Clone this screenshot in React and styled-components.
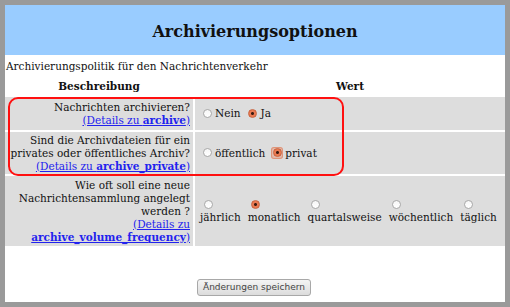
import React from "react";
import styled, { createGlobalStyle } from "styled-components";

const Global = createGlobalStyle`
  html, body { margin: 0; padding: 0; background: #9a9a9a; }
  body { font-family: "DejaVu Serif", serif; font-size: 10.5px; color: #111; }
`;

const Page = styled.div`
  position: relative;
  margin: 5px;
  height: 297px;
  background: #fff;
  overflow: hidden;
`;

const Header = styled.div`
  height: 50px;
  background: #99ccff;
  display: flex;
  align-items: center;
  justify-content: center;
`;

const Title = styled.h1`
  margin: 0;
  font-size: 16px;
  font-weight: bold;
  color: #111;
  padding-top: 2px;
`;

const Intro = styled.div`
  padding: 5px 1px 0;
  line-height: 13px;
`;

const Table = styled.div`
  display: grid;
  grid-template-columns: 188px 1fr;
  grid-template-rows: 20px 33px 42px 70px;
  column-gap: 2px;
  row-gap: 2px;
  margin-top: 2px;
`;

const HeadCell = styled.div`
  text-align: center;
  font-weight: bold;
  line-height: 13px;
  padding-top: 5px;
`;

const DescCell = styled.div`
  background: #dddddd;
  display: flex;
  align-items: center;
  justify-content: flex-end;
  padding-right: 3px;
`;

const DescText = styled.div`
  text-align: right;
  line-height: 13px;
`;

const ValueCell = styled.div`
  background: #dddddd;
  display: flex;
  align-items: center;
  padding-left: ${(p) => p.$pl || "8px"};
`;

const Link = styled.a`
  color: #2222ee;
  text-decoration: underline;
  cursor: pointer;
  b { font-weight: bold; }
`;

const Option = styled.label`
  display: inline-flex;
  align-items: center;
  margin-right: 8px;
  line-height: 13px;
`;

const StackOption = styled.label`
  display: inline-flex;
  flex-direction: column;
  align-items: flex-start;
  margin-right: 7px;
  line-height: 13px;
`;

const RadioWrap = styled.span`
  display: inline-flex;
  align-items: center;
  justify-content: center;
  width: 12px;
  height: 12px;
  margin: ${(p) => p.$m || "-1px 2px 0 -2px"};
  border-radius: 3px;
  background: ${(p) => (p.$focus ? "rgba(235,120,80,0.35)" : "transparent")};
  box-shadow: ${(p) => (p.$focus ? "inset 0 0 0 1px rgba(220,110,70,0.5)" : "none")};
`;

const Dot = styled.span`
  width: 9px;
  height: 9px;
  box-sizing: border-box;
  border-radius: 50%;
  border: 1px solid ${(p) => (p.$on ? "#c8623c" : "#a9a9a9")};
  background: ${(p) =>
    p.$on
      ? "radial-gradient(circle, #3a1a10 0 1.2px, #ea7a52 1.7px)"
      : "linear-gradient(#f6f6f6, #ffffff)"};
`;

const Radio = ({ on, focus, m }) => (
  <RadioWrap $focus={focus} $m={m}>
    <Dot $on={on} />
  </RadioWrap>
);

const Footer = styled.div`
  display: grid;
  grid-template-columns: 188px 1fr;
  column-gap: 2px;
  padding-top: 33px;
`;

const Button = styled.button`
  grid-column: 2;
  justify-self: start;
  margin-left: 2px;
  height: 17px;
  padding: 0 5px;
  font-family: "DejaVu Sans", sans-serif;
  font-size: 9px;
  color: #444;
  border: 1px solid #a8a8a8;
  border-radius: 3px;
  background: linear-gradient(#f4f4f4, #dcdcdc);
  line-height: 15px;
`;

const Highlight = styled.div`
  position: absolute;
  left: 3px;
  top: 92px;
  width: 336px;
  height: 79px;
  box-sizing: border-box;
  border: 2px solid #ff1010;
  border-radius: 10px;
  pointer-events: none;
`;

const freq = [
  ["jährlich", false],
  ["monatlich", true],
  ["quartalsweise", false],
  ["wöchentlich", false],
  ["täglich", false],
];

export default function App() {
  return (
    <>
      <Global />
      <Page>
        <Header>
          <Title>Archivierungsoptionen</Title>
        </Header>
        <Intro>Archivierungspolitik für den Nachrichtenverkehr</Intro>
        <Table>
          <HeadCell>Beschreibung</HeadCell>
          <HeadCell>Wert</HeadCell>

          <DescCell>
            <DescText>
              Nachrichten archivieren?
              <br />
              <Link>
                (Details zu <b>archive</b>)
              </Link>
            </DescText>
          </DescCell>
          <ValueCell>
            <Option>
              <Radio />
              Nein
            </Option>
            <Option>
              <Radio on />
              Ja
            </Option>
          </ValueCell>

          <DescCell>
            <DescText>
              Sind die Archivdateien für ein
              <br />
              privates oder öffentliches Archiv?
              <br />
              <Link>
                (Details zu <b>archive_private</b>)
              </Link>
            </DescText>
          </DescCell>
          <ValueCell>
            <Option>
              <Radio />
              öffentlich
            </Option>
            <Option>
              <Radio on focus />
              privat
            </Option>
          </ValueCell>

          <DescCell>
            <DescText>
              Wie oft soll eine neue
              <br />
              Nachrichtensammlung angelegt
              <br />
              werden ?
              <br />
              <Link>(Details zu</Link>
              <br />
              <Link>
                <b>archive_volume_frequency</b>)
              </Link>
            </DescText>
          </DescCell>
          <ValueCell $pl="5px">
            {freq.map(([label, on]) => (
              <StackOption key={label}>
                <Radio on={on} m="0 0 0 2px" />
                {label}
              </StackOption>
            ))}
          </ValueCell>
        </Table>
        <Footer>
          <Button>Änderungen speichern</Button>
        </Footer>
        <Highlight />
      </Page>
    </>
  );
}
